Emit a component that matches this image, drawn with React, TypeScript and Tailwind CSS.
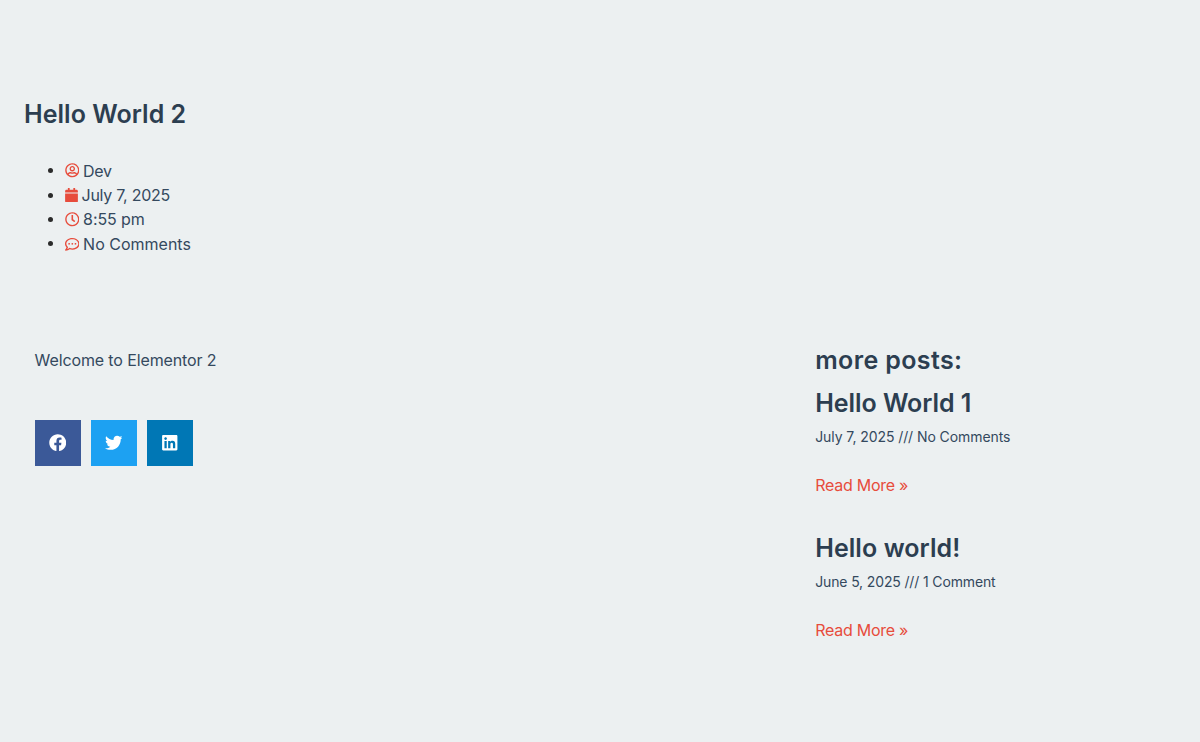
import type { ReactNode } from "react";
import {
  FaCalendar,
  FaFacebook,
  FaLinkedin,
  FaRegClock,
  FaRegCommentDots,
  FaRegUserCircle,
  FaTwitter,
} from "react-icons/fa";

function Heading({ children, className }: { children: ReactNode; className: string }) {
  return (
    <h2 className={`whitespace-nowrap text-[25px] font-semibold leading-[30px] text-[#2c3e50] ${className}`}>
      {children}
    </h2>
  );
}

function MetaItem({ icon, children, className }: { icon: ReactNode; children: ReactNode; className: string }) {
  return (
    <li className="flex h-[24.45px] items-center whitespace-nowrap text-[16px] text-[#34495e]">
      <span className="mr-[11.5px] size-[5px] rounded-full bg-[#2b2b2b]" />
      <span className="text-[14.6px] text-[#e74c3c]">{icon}</span>
      <span className={className}>{children}</span>
    </li>
  );
}

function Share({ icon, label, className }: { icon: ReactNode; label: string; className: string }) {
  return (
    <a aria-label={label} className={`flex size-[46px] items-center justify-center text-[17.5px] text-white ${className}`}>
      {icon}
    </a>
  );
}

function ReadMore() {
  return (
    <a className="mt-[26px] block whitespace-nowrap text-[16px] leading-6 tracking-[-0.26px] text-[#e74c3c]">
      Read More »
    </a>
  );
}

export default function App() {
  return (
    <main className="h-[742px] w-full overflow-hidden bg-[#ecf0f1] pt-[99px] font-['Inter',sans-serif] font-[375]">
      <header className="pl-6">
        <Heading className="tracking-[0.03px]">Hello World 2</Heading>
        <ul className="mt-[29.4px] pl-6">
          <MetaItem icon={<FaRegUserCircle />} className="ml-[4px] tracking-[-0.35px]">Dev</MetaItem>
          <MetaItem icon={<FaCalendar className="w-[13px]" />} className="ml-[4px] tracking-[-0.25px]">July 7, 2025</MetaItem>
          <MetaItem icon={<FaRegClock />} className="ml-[4px] tracking-[-0.1px]">8:55 pm</MetaItem>
          <MetaItem icon={<FaRegCommentDots />} className="ml-[4px]">No Comments</MetaItem>
        </ul>
      </header>
      <div className="mt-[90.6px] flex pl-[34.6px]">
        <section className="w-[780.6px] pt-[1px]">
          <p className="whitespace-nowrap text-[16px] leading-6 tracking-[-0.12px] text-[#34495e]">
            Welcome to Elementor 2
          </p>
          <div className="mt-[48px] flex gap-[10px]">
            <Share label="Facebook" icon={<FaFacebook />} className="bg-[#3b5998]" />
            <Share label="Twitter" icon={<FaTwitter />} className="bg-[#1da1f2]" />
            <Share label="LinkedIn" icon={<FaLinkedin />} className="bg-[#0077b5]" />
          </div>
        </section>
        <aside className="-mt-[2px]">
          <Heading className="tracking-[0.38px]">more posts:</Heading>
          <article className="mt-[13px]">
            <Heading className="-tracking-[0.05px]">Hello World 1</Heading>
            <p className="mt-[9px] whitespace-nowrap text-[14px] leading-5 tracking-[-0.08px] text-[#34495e]">
              July 7, 2025 /// No Comments
            </p>
            <ReadMore />
          </article>
          <article className="mt-[36px]">
            <Heading className="tracking-[0.07px]">Hello world!</Heading>
            <p className="mt-[9px] whitespace-nowrap text-[14px] leading-5 tracking-[-0.14px] text-[#34495e]">
              June 5, 2025 /// 1 Comment
            </p>
            <ReadMore />
          </article>
        </aside>
      </div>
    </main>
  );
}
